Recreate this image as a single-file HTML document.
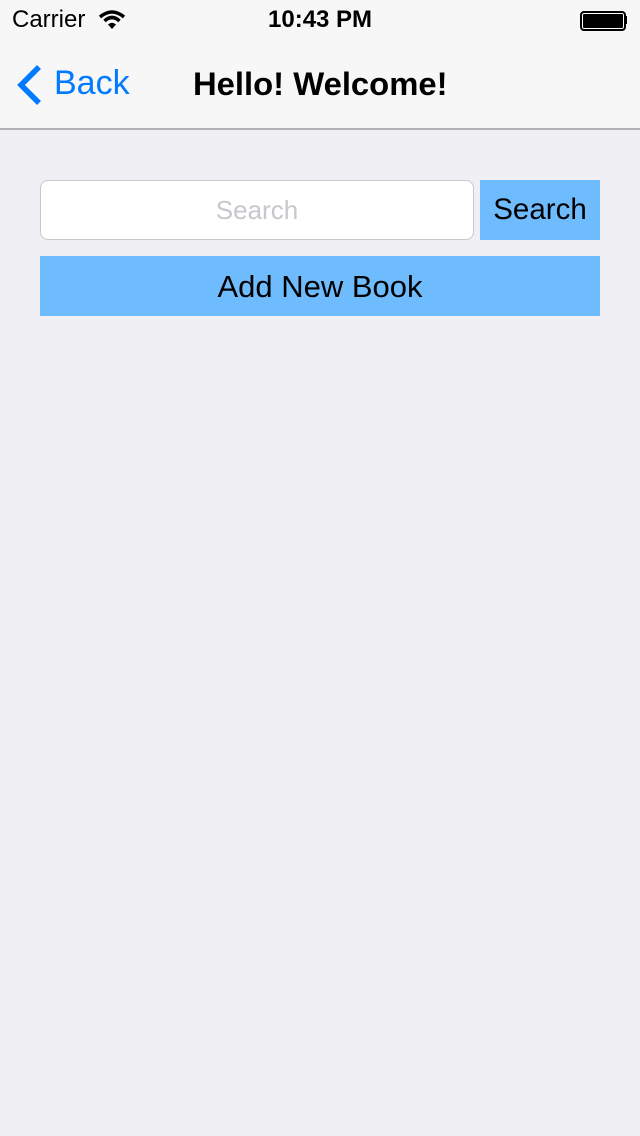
<!DOCTYPE html>
<html><head><style>
body{margin:0;width:640px;height:1136px;background:#efeff4;font-family:"Liberation Sans",sans-serif;position:relative;overflow:hidden}
.nav{position:absolute;left:0;top:0;width:640px;height:128px;background:#f7f7f7;border-bottom:2px solid #b2b2b2}
.t{position:absolute;white-space:nowrap}
</style></head><body>
<div class="nav">
<div class="t" style="left:12px;top:6px;font-size:24px;color:#000">Carrier</div>
<svg class="t" style="left:98px;top:10px" width="28" height="20" viewBox="0 0 28 20"><path d="M2 7 Q14 -3 26 7" stroke="#000" stroke-width="3.5" fill="none"/><path d="M6.5 11 Q14 4 21.5 11" stroke="#000" stroke-width="3.5" fill="none"/><path d="M10 14.5 L14 19 L18 14.5 Q14 11 10 14.5Z" fill="#000"/></svg>
<div class="t" style="left:268px;top:6px;font-size:24px;font-weight:bold">10:43 PM</div>
<div class="t" style="left:580px;top:11px;width:42px;height:16px;border:2px solid #000;border-radius:4px;background:#000;box-shadow:inset 0 0 0 1px #fff"></div>
<div class="t" style="left:624px;top:16px;width:3px;height:8px;background:#000"></div>
<svg class="t" style="left:14px;top:64px" width="30" height="42" viewBox="0 0 30 42"><path d="M25 3 L7 21 L25 39" stroke="#007aff" stroke-width="5.5" fill="none"/></svg>
<div class="t" style="left:54px;top:64px;font-size:34px;color:#007aff">Back</div>
<div class="t" style="left:193px;top:65px;font-size:32.8px;font-weight:bold">Hello! Welcome!</div>
</div>
<div class="t" style="left:40px;top:180px;width:432px;height:58px;background:#fff;border:1px solid #c8c8c8;border-radius:8px;font-size:26px;color:#c7c7cd;text-align:center;line-height:58px">Search</div>
<div class="t" style="left:480px;top:180px;width:120px;height:60px;background:#6ebbfe;font-size:29.5px;text-align:center;line-height:60px">Search</div>
<div class="t" style="left:40px;top:256px;width:560px;height:60px;background:#6ebbfe;font-size:31px;text-align:center;line-height:62px">Add New Book</div>
</body></html>
